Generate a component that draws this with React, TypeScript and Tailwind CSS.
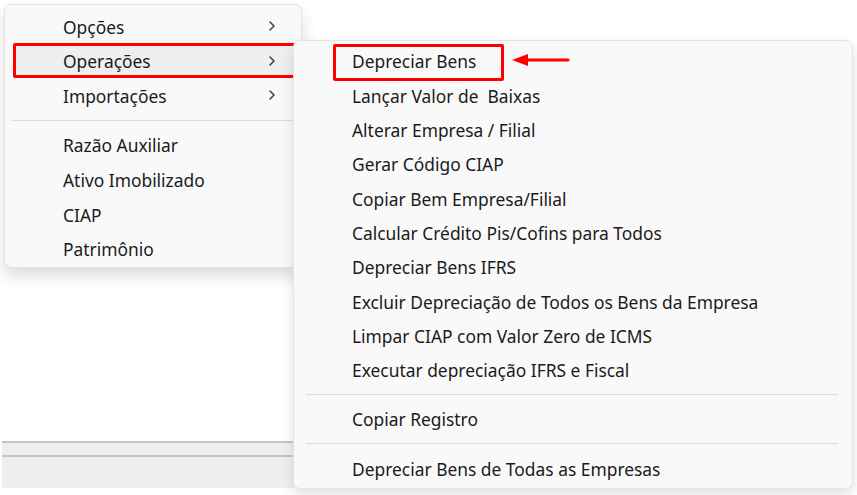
import React from 'react';

const mainItems = [
  { label: 'Opções', sub: true },
  { label: 'Operações', sub: true, active: true },
  { label: 'Importações', sub: true },
  { sep: true },
  { label: 'Razão Auxiliar' },
  { label: 'Ativo Imobilizado' },
  { label: 'CIAP' },
  { label: 'Patrimônio' },
];

const subItems = [
  { label: 'Depreciar Bens', marked: true },
  { label: 'Lançar Valor de  Baixas' },
  { label: 'Alterar Empresa / Filial' },
  { label: 'Gerar Código CIAP' },
  { label: 'Copiar Bem Empresa/Filial' },
  { label: 'Calcular Crédito Pis/Cofins para Todos' },
  { label: 'Depreciar Bens IFRS' },
  { label: 'Excluir Depreciação de Todos os Bens da Empresa' },
  { label: 'Limpar CIAP com Valor Zero de ICMS' },
  { label: 'Executar depreciação IFRS e Fiscal' },
  { sep: true },
  { label: 'Copiar Registro' },
  { sep: true },
  { label: 'Depreciar Bens de Todas as Empresas' },
];

function Chevron() {
  return (
    <svg width="10" height="12" viewBox="0 0 10 12" className="text-[#444]">
      <path d="M3 2 L7 6 L3 10" fill="none" stroke="currentColor" strokeWidth="1.6" strokeLinecap="round" strokeLinejoin="round" />
    </svg>
  );
}

export default function App() {
  return (
    <div className="relative w-[857px] h-[495px] bg-white overflow-hidden font-['Noto_Sans',sans-serif] text-[17.4px] text-[#1b1b1b]">
      {/* window behind the menus */}
      <div className="flex flex-col pt-[441px] w-[293px] ml-[2px]">
        <div className="h-[2px] bg-[#c4c4c4]" />
        <div className="h-[12px] bg-[#efefef]" />
        <div className="h-[2px] bg-[#c4c4c4]" />
        <div className="h-[31px] bg-[#efefef]" />
      </div>

      {/* main context menu */}
      <div className="absolute left-[4px] top-[4px] w-[298px] rounded-[7px] border border-[#e3e3e3] bg-[#f9f9f9] shadow-[0_8px_16px_rgba(0,0,0,0.14)] pt-[4px] pb-[1px]">
        {mainItems.map((it, i) =>
          it.sep ? (
            <div key={i} className="mx-[6px] my-[7px] h-px bg-[#dcdcdc]" />
          ) : (
            <div
              key={i}
              className={`relative mx-[8px] h-[34.6px] flex items-center pl-[50px] pr-[16px] ${it.active ? 'bg-[#efefef]' : ''}`}
            >
              <span className="flex-1 leading-none translate-y-[1px]">{it.label}</span>
              {it.sub && <Chevron />}
              {it.active && <div className="absolute left-0 -right-[3px] -top-[1px] bottom-0 border-[3px] border-[#ff0000] rounded-[2px]" />}
            </div>
          )
        )}
      </div>

      {/* submenu */}
      <div className="absolute left-[293px] top-[40px] w-[560px] h-[449px] rounded-[7px] border border-[#e3e3e3] bg-[#f9f9f9] shadow-[0_6px_14px_rgba(0,0,0,0.12)] pt-[3px]">
        {subItems.map((it, i) =>
          it.sep ? (
            <div key={i} className="ml-[12px] mr-[14px] my-[7px] h-px bg-[#dcdcdc]" />
          ) : (
            <div key={i} className="relative h-[34.3px] flex items-center pl-[58px]">
              <span className="leading-none whitespace-pre translate-y-[1px]">{it.label}</span>
              {it.marked && <div className="absolute left-[39px] w-[171px] top-0 h-[37px] border-[3px] border-[#ff0000] rounded-[2px]" />}
            </div>
          )
        )}
      </div>

      {/* arrow annotation */}
      <svg className="absolute left-[508px] top-[50px]" width="64" height="20" viewBox="0 0 64 20">
        <path d="M60 10 L16 10" stroke="#ff0000" strokeWidth="3" strokeLinecap="round" />
        <path d="M4 10 L20 4 L20 16 Z" fill="#ff0000" />
      </svg>
    </div>
  );
}
